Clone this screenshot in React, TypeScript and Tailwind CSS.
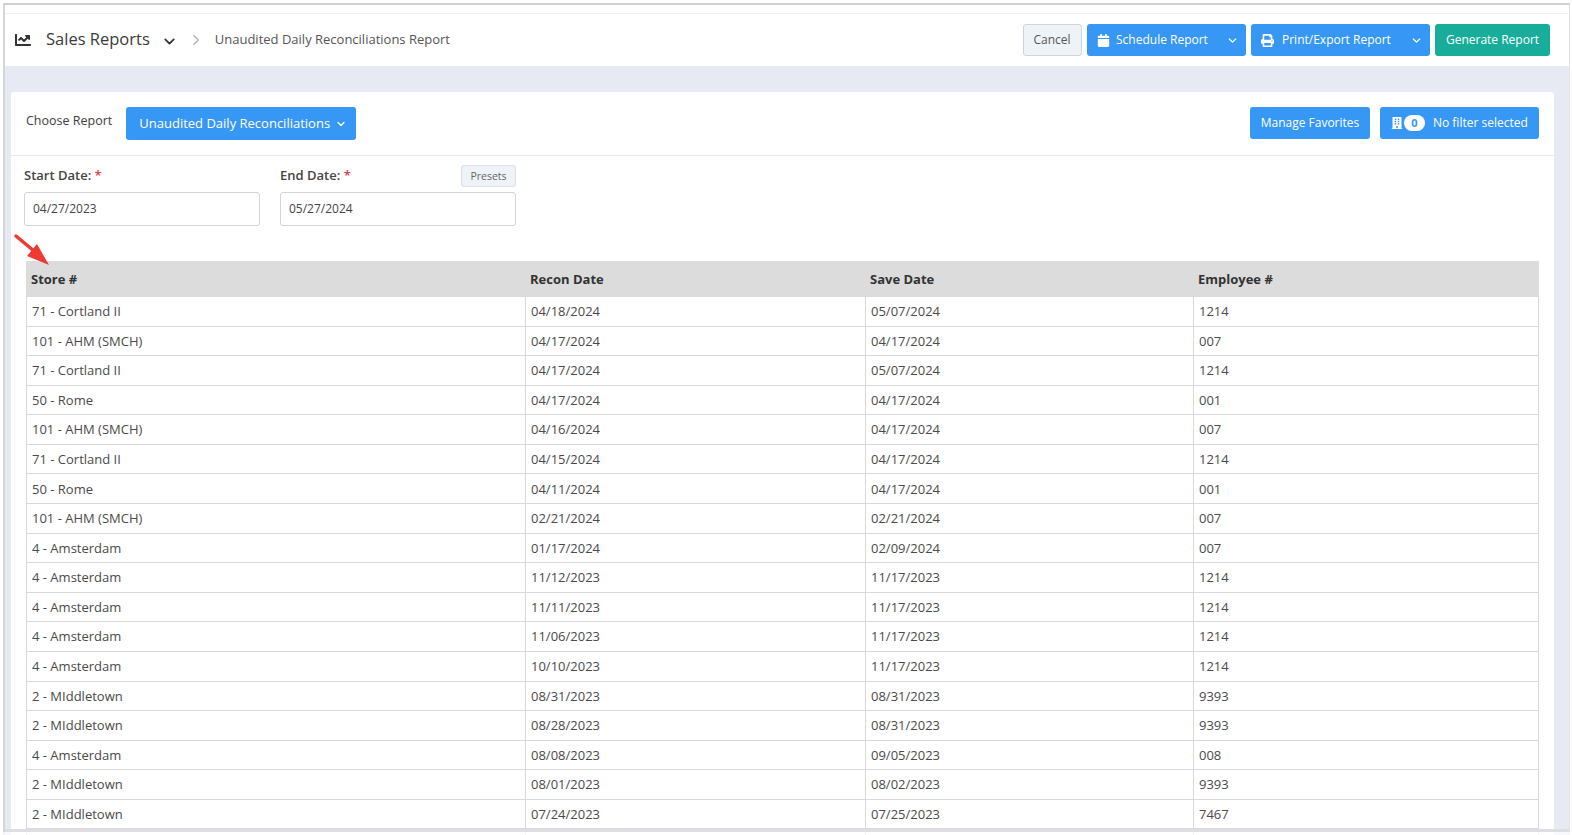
import { Fragment } from "react";
import { ChevronDown, ChevronRight } from "lucide-react";
import { FaCalendar, FaChartLine, FaPrint, FaBuilding } from "react-icons/fa";

const rows = [
  ["71 - Cortland II", "04/18/2024", "05/07/2024", "1214"],
  ["101 - AHM (SMCH)", "04/17/2024", "04/17/2024", "007"],
  ["71 - Cortland II", "04/17/2024", "05/07/2024", "1214"],
  ["50 - Rome", "04/17/2024", "04/17/2024", "001"],
  ["101 - AHM (SMCH)", "04/16/2024", "04/17/2024", "007"],
  ["71 - Cortland II", "04/15/2024", "04/17/2024", "1214"],
  ["50 - Rome", "04/11/2024", "04/17/2024", "001"],
  ["101 - AHM (SMCH)", "02/21/2024", "02/21/2024", "007"],
  ["4 - Amsterdam", "01/17/2024", "02/09/2024", "007"],
  ["4 - Amsterdam", "11/12/2023", "11/17/2023", "1214"],
  ["4 - Amsterdam", "11/11/2023", "11/17/2023", "1214"],
  ["4 - Amsterdam", "11/06/2023", "11/17/2023", "1214"],
  ["4 - Amsterdam", "10/10/2023", "11/17/2023", "1214"],
  ["2 - MIddletown", "08/31/2023", "08/31/2023", "9393"],
  ["2 - MIddletown", "08/28/2023", "08/31/2023", "9393"],
  ["4 - Amsterdam", "08/08/2023", "09/05/2023", "008"],
  ["2 - MIddletown", "08/01/2023", "08/02/2023", "9393"],
  ["2 - MIddletown", "07/24/2023", "07/25/2023", "7467"],
  ["", "", "", ""],
];

function SplitButton({ icon, label, width, gap }: { icon: React.ReactNode; label: string; width: string; gap: string }) {
  return (
    <button className={`flex h-8 items-center rounded-[3px] bg-[#3797f5] pl-[10px] pr-[7px] text-[12px] text-white ${width}`}>
      {icon}
      <span className={`flex-1 text-left ${gap}`}>{label}</span>
      <ChevronDown size={13} strokeWidth={2.5} />
    </button>
  );
}

export default function App() {
  return (
    <div className="relative h-[835px] w-[1572px] overflow-hidden bg-white font-['Open_Sans',sans-serif] text-[#444]">
      <div className="ml-[3px] mr-[2px] mt-[3px] h-[900px] border-l-2 border-r border-t-2 border-l-[#d4d6da] border-r-[#dfe1e6] border-t-[#cfd0d3]">
        <header className="h-[61px] bg-white pt-[8px]">
          <div className="flex h-[53px] items-center border-t border-[#f0f0f0] pl-[10px] pr-[19px]">
            <FaChartLine size={16} className="text-[#333]" />
            <span className="ml-[15px] -mt-[2px] text-[16.5px] text-[#3b3b3b]">Sales Reports</span>
            <ChevronDown size={17} strokeWidth={2.5} className="ml-[11px] mt-[3px] text-[#333]" />
            <ChevronRight size={18} strokeWidth={1.5} className="ml-[9px] text-[#aaa]" />
            <span className="ml-[10px] text-[13px] text-[#555]">Unaudited Daily Reconciliations Report</span>
            <div className="ml-auto flex items-center gap-[5px]">
              <button className="h-8 w-[59px] rounded-[3px] border border-[#ccd3da] bg-[#eef3f8] pr-[1px] text-[12px] text-[#555]">Cancel</button>
              <SplitButton icon={<FaCalendar size={13} />} label="Schedule Report" width="w-[159px]" gap="ml-[6px]" />
              <SplitButton icon={<FaPrint size={13} />} label="Print/Export Report" width="w-[179px]" gap="ml-[8px]" />
              <button className="h-8 w-[115px] rounded-[3px] bg-[#17ad9a] text-[12px] text-white">Generate Report</button>
            </div>
          </div>
        </header>

        <main className="h-[840px] bg-[#e8eaf3] pl-[6px] pr-[15px] pt-[26px]">
          <section className="h-[800px] rounded-t-[3px] bg-white">
            <div className="flex h-[64px] items-center border-b border-[#e9e9ee] pl-[15px] pr-[15px]">
              <span className="mb-[5px] text-[12.5px] text-[#3d3d3d]">Choose Report</span>
              <button className="ml-[14px] flex h-[33px] w-[230px] items-center gap-[5px] rounded-[3px] bg-[#3797f5] pl-[13px] text-[13px] text-white">
                Unaudited Daily Reconciliations
                <ChevronDown size={12} strokeWidth={2.5} />
              </button>
              <button className="mb-[1px] ml-auto h-8 w-[120px] rounded-[3px] bg-[#3797f5] text-[12px] text-white">Manage Favorites</button>
              <button className="mb-[1px] ml-[10px] flex h-8 w-[159px] items-center rounded-[3px] bg-[#3797f5] pl-[11px] text-[12px] text-white">
                <FaBuilding size={12} />
                <span className="ml-[1px] flex h-[16px] w-[21px] items-center justify-center rounded-full bg-white text-[11px] font-bold text-[#3797f5]">0</span>
                <span className="ml-[8px]">No filter selected</span>
              </button>
            </div>

            <div className="flex h-[105px] gap-[20px] pl-[13px] pt-[8px]">
              <div className="w-[236px]">
                <div className="h-[28px] pt-[2px] text-[13px] font-semibold text-[#444]">
                  Start Date: <span className="text-[#d9414f]">*</span>
                </div>
                <div className="flex h-[34px] items-center rounded-[3px] border border-[#d5d5d5] pl-[8px] text-[12px] text-[#444]">04/27/2023</div>
              </div>
              <div className="w-[236px]">
                <div className="flex h-[28px] items-start justify-between pt-[2px] text-[13px] font-semibold text-[#444]">
                  <span>End Date: <span className="text-[#d9414f]">*</span></span>
                  <button className="-mt-[1px] h-[22px] w-[55px] rounded-[3px] border border-[#d8e1ea] bg-[#eef3f8] pt-[1px] text-[10.5px] font-normal text-[#666]">Presets</button>
                </div>
                <div className="flex h-[34px] items-center rounded-[3px] border border-[#d5d5d5] pl-[8px] text-[12px] text-[#444]">05/27/2024</div>
              </div>
            </div>

            <div className="ml-[15px] grid w-[1513px] grid-cols-[499px_340px_328px_346px] border-r border-[#d9d9d9] text-[13px]">
              {["Store #", "Recon Date", "Save Date", "Employee #"].map((h) => (
                <div key={h} className="flex h-[36px] items-center bg-[#dcdcdc] pl-[5px] pt-[1px] text-[13px] font-bold text-[#333]">{h}</div>
              ))}
              {rows.map((r, i) => (
                <Fragment key={i}>
                  {r.map((c, j) => (
                    <div key={j} className="flex h-[29.58px] items-center border-b border-l border-[#d9d9d9] pl-[5px] pt-[1px] text-[#4a4a4a]">{c}</div>
                  ))}
                </Fragment>
              ))}
            </div>
          </section>
        </main>
      </div>

      {/* bottom edge of the captured window */}
      <div className="absolute left-[5px] right-[3px] top-[829px] h-[3px] bg-[#dcdee2]" />
      <div className="absolute left-[3px] top-[832px] h-[3px] w-[1569px] bg-white/70" />

      {/* annotation arrow */}
      <svg className="absolute left-[13px] top-[233px]" width="40" height="36" viewBox="0 0 40 36">
        <path d="M3 3 L21 18" stroke="#ee3a34" strokeWidth="3.5" strokeLinecap="round" />
        <path d="M36 32 L14 23 L24 11 Z" fill="#ee3a34" />
      </svg>
    </div>
  );
}
